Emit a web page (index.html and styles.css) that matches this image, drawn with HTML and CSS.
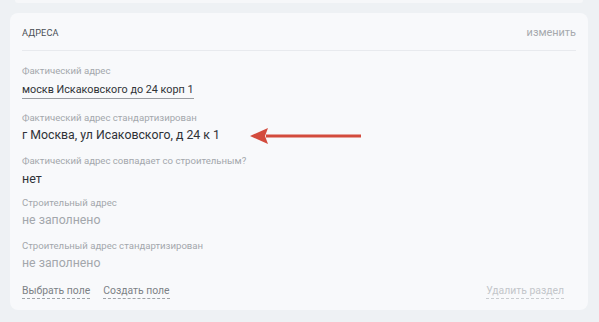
FILE: index.html
```html
<!DOCTYPE html>
<html lang="ru">
<head>
<meta charset="utf-8">
<link rel="stylesheet" href="styles.css">
</head>
<body>
<div class="prev-card"></div>
<section class="card">
  <header class="card-head">
    <span class="title">АДРЕСА</span>
    <span class="edit">изменить</span>
  </header>
  <div class="fields">
    <div class="field f1">
      <div class="label">Фактический адрес</div>
      <div class="value"><span class="input-value">москв Искаковского до 24 корп 1</span></div>
    </div>
    <div class="field f2">
      <div class="label">Фактический адрес стандартизирован</div>
      <div class="value big">г Москва, ул Исаковского, д 24 к 1</div>
      <svg class="arrow" width="112" height="18" viewBox="0 0 112 18">
        <path d="M16 7.5 H111 V10.5 H16 Z" fill="#d34b3d"/>
        <path d="M0 9 L18 1 L15 9 L18 17 Z" fill="#d34b3d"/>
      </svg>
    </div>
    <div class="field f3">
      <div class="label">Фактический адрес совпадает со строительным?</div>
      <div class="value">нет</div>
    </div>
    <div class="field f4">
      <div class="label">Строительный адрес</div>
      <div class="value empty">не заполнено</div>
    </div>
    <div class="field f5">
      <div class="label">Строительный адрес стандартизирован</div>
      <div class="value empty">не заполнено</div>
    </div>
  </div>
  <footer class="card-foot">
    <div class="links">
      <a class="link">Выбрать поле</a>
      <a class="link">Создать поле</a>
    </div>
    <a class="link danger">Удалить раздел</a>
  </footer>
</section>
</body>
</html>
```

FILE: styles.css
```css
* { box-sizing: border-box; }
html, body { margin: 0; padding: 0; }
body {
  background: #eef1f4;
  font-family: "Roboto", "Open Sans", sans-serif;
  width: 599px;
  height: 322px;
  overflow: hidden;
}
.prev-card {
  height: 3px;
  margin: 0 16px 0 15px;
  background: #f6f7f9;
  border-radius: 0 0 6px 6px;
}
.card {
  margin: 10px 11px 0 10px;
  height: 297px;
  background: #f8f9fb;
  border-radius: 8px;
  padding: 0 12px;
  display: flex;
  flex-direction: column;
}
.card-head {
  height: 38px;
  display: flex;
  justify-content: space-between;
  align-items: center;
  padding-top: 2px;
  border-bottom: 1px solid #e8eaee;
}
.title {
  font-size: 9.2px;
  color: #4a4f55;
  letter-spacing: 0.1px;
}
.edit {
  font-size: 10.9px;
  color: #a6a9ad;
}
.fields {
  display: flex;
  flex-direction: column;
  padding-top: 13px;
}
.field {
  position: relative;
}
.f1 { margin-bottom: 12px; }
.f2 { margin-bottom: 10px; }
.f3 { margin-bottom: 8px; }
.f4 { margin-bottom: 10px; }
.label {
  font-size: 9.6px;
  color: #a3a7ac;
  line-height: 14px;
}
.value {
  font-size: 12.5px;
  color: #2f3237;
  line-height: 18px;
  margin-top: 1px;
}
.f1 .value { margin-top: 4px; font-size: 10.8px; line-height: 16px; }
.f3 .value { margin-top: 2px; }
.value.big { font-size: 12.3px; }
.value.empty { color: #a3a7ac; font-size: 12.3px; }
.input-value {
  display: inline-block;
  border-bottom: 1px solid #9a9da2;
  line-height: 16px;
  vertical-align: top;
}
.arrow {
  position: absolute;
  left: 228px;
  top: 16px;
}
.card-foot {
  margin-top: auto;
  height: 27px;
  display: flex;
  justify-content: space-between;
  align-items: flex-start;
  padding-right: 12px;
}
.links { display: flex; gap: 13px; }
.link {
  font-size: 10.4px;
  color: #7c8186;
  border-bottom: 1px dashed #9ea2a7;
  line-height: 15px;
}
.link.danger {
  color: #c3c6ca;
  border-bottom-color: #c9ccd0;
}
```
